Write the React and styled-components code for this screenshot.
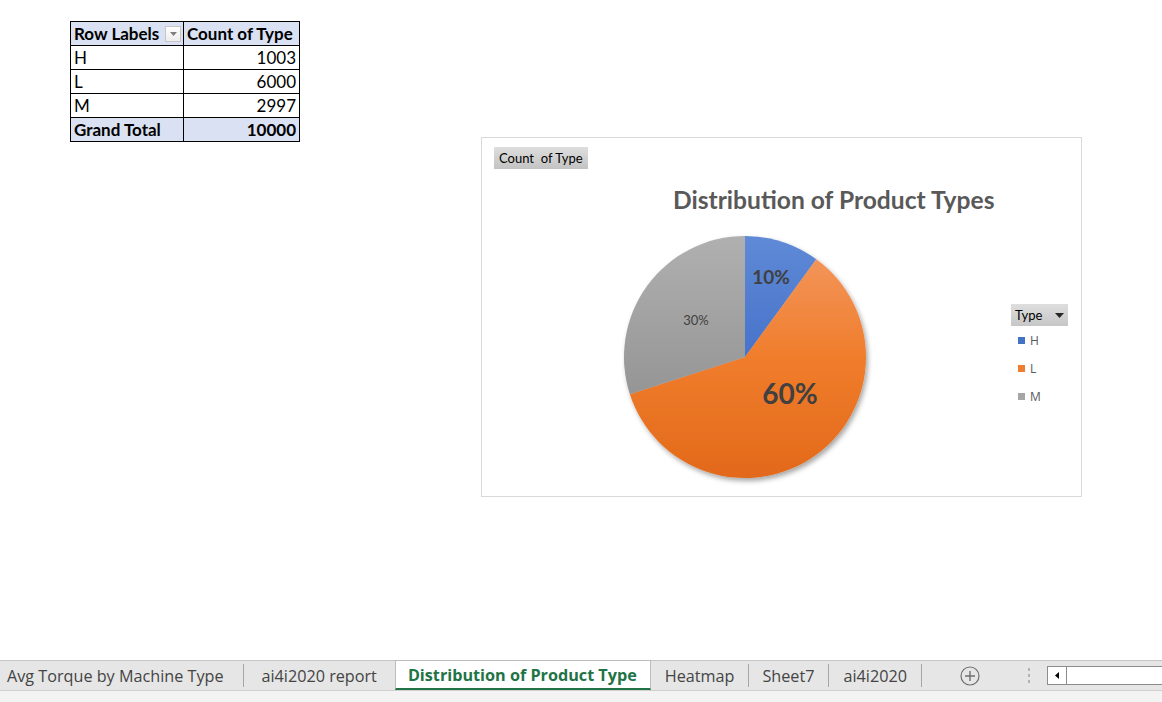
import React from "react";
import styled, { createGlobalStyle } from "styled-components";

const GlobalStyle = createGlobalStyle`
  html, body {
    margin: 0;
    padding: 0;
    background: #fff;
  }
  body {
    font-family: Lato, "Liberation Sans", sans-serif;
  }
`;

const rows = [
  { label: "H", count: 1003 },
  { label: "L", count: 6000 },
  { label: "M", count: 2997 },
];

const legend = [
  { label: "H", color: "#4472c4" },
  { label: "L", color: "#ed7d31" },
  { label: "M", color: "#a5a5a5" },
];

// left/right padding of each sheet tab, taken from the screenshot
const tabs = [
  { name: "Avg Torque by Machine Type", pad: [7, 19] },
  { name: "ai4i2020 report", pad: [18, 18] },
  { name: "Distribution of Product Type", pad: [12, 13], active: true },
  { name: "Heatmap", pad: [14, 14] },
  { name: "Sheet7", pad: [13, 14] },
  { name: "ai4i2020", pad: [14, 14] },
];

const App = () => {
  return (
    <Page>
      <GlobalStyle />
      <Sheet>
        <PivotTable>
          <tbody>
            <tr>
              <HeadCell>
                <HeadLabel>
                  Row Labels
                  <FilterButton>
                    <svg width="7" height="4" viewBox="0 0 7 4">
                      <path d="M0 0h7L3.5 4z" fill="#7f7f7f" />
                    </svg>
                  </FilterButton>
                </HeadLabel>
              </HeadCell>
              <HeadCell>Count of Type</HeadCell>
            </tr>
            {rows.map((row) => (
              <tr key={row.label}>
                <Cell>{row.label}</Cell>
                <Cell $right>{row.count}</Cell>
              </tr>
            ))}
            <tr>
              <TotalCell>Grand Total</TotalCell>
              <TotalCell $right>10000</TotalCell>
            </tr>
          </tbody>
        </PivotTable>

        <ChartBox>
          <FieldButton>Count&nbsp; of Type</FieldButton>
          <ChartTitle>Distribution of Product Types</ChartTitle>
          <PlotRow>
            <PieChart />
            <Legend>
              <LegendButton>
                Type
                <svg width="9" height="5" viewBox="0 0 9 5">
                  <path d="M0 0h9L4.5 5z" fill="#262626" />
                </svg>
              </LegendButton>
              {legend.map((item) => (
                <LegendItem key={item.label}>
                  <Swatch $color={item.color} />
                  {item.label}
                </LegendItem>
              ))}
            </Legend>
          </PlotRow>
        </ChartBox>
      </Sheet>

      <TabBar>
        <TabRow>
          {tabs.map((tab, i) => (
            <React.Fragment key={tab.name}>
              <Tab $active={tab.active} $pad={tab.pad}>
                {tab.name}
              </Tab>
              {!tab.active && !(tabs[i + 1] && tabs[i + 1].active) && <Separator />}
            </React.Fragment>
          ))}
          <AddSheet>
            <svg width="20" height="20" viewBox="0 0 20 20">
              <circle cx="10" cy="10" r="9" fill="none" stroke="#6f6f6f" strokeWidth="1.2" />
              <path d="M10 5v10M5 10h10" stroke="#6f6f6f" strokeWidth="1.4" />
            </svg>
          </AddSheet>
          <Grip>
            <span />
            <span />
            <span />
          </Grip>
          <ScrollBar>
            <ScrollArrow>
              <svg width="4" height="7" viewBox="0 0 4 7">
                <path d="M4 0v7L0 3.5z" fill="#000" />
              </svg>
            </ScrollArrow>
          </ScrollBar>
        </TabRow>
        <StatusStrip />
      </TabBar>
    </Page>
  );
};

const PieChart = () => {
  return (
    <PieSvg width="260" height="264" viewBox="0 0 260 264">
      <defs>
        <linearGradient id="gH" gradientUnits="userSpaceOnUse" x1="0" y1="9" x2="0" y2="251">
          <stop offset="0" stopColor="#5f8ad6" />
          <stop offset="1" stopColor="#2f5cbf" />
        </linearGradient>
        <linearGradient id="gL" gradientUnits="userSpaceOnUse" x1="0" y1="9" x2="0" y2="251">
          <stop offset="0" stopColor="#f39a64" />
          <stop offset="0.5" stopColor="#f07d2c" />
          <stop offset="1" stopColor="#e2691a" />
        </linearGradient>
        <linearGradient id="gM" gradientUnits="userSpaceOnUse" x1="0" y1="9" x2="0" y2="251">
          <stop offset="0" stopColor="#b0b0b0" />
          <stop offset="1" stopColor="#878787" />
        </linearGradient>
        <filter id="pieShadow" x="-10%" y="-10%" width="125%" height="125%">
          <feDropShadow dx="2" dy="3" stdDeviation="2.5" floodColor="#000" floodOpacity="0.35" />
        </filter>
      </defs>
      <g filter="url(#pieShadow)">
        <path d="M130 130 L130 9 A121 121 0 0 1 201.29 32.23 Z" fill="url(#gH)" />
        <path d="M130 130 L201.29 32.23 A121 121 0 1 1 14.86 167.2 Z" fill="url(#gL)" />
        <path d="M130 130 L14.86 167.2 A121 121 0 0 1 130 9 Z" fill="url(#gM)" />
      </g>
      <PieLabel x="156" y="57" fontSize="19" fontWeight="700" textAnchor="middle">
        10%
      </PieLabel>
      <PieLabel x="81" y="98" fontSize="13" textAnchor="middle">
        30%
      </PieLabel>
      <PieLabel x="175" y="177" fontSize="28" fontWeight="700" textAnchor="middle">
        60%
      </PieLabel>
    </PieSvg>
  );
};

const Page = styled.div`
  height: 100vh;
  display: flex;
  flex-direction: column;
  overflow: hidden;
`;

const Sheet = styled.div`
  display: flex;
  align-items: flex-start;
  padding: 21px 0 0 70px;
`;

const PivotTable = styled.table`
  border-collapse: collapse;
  font-family: Lato, "Liberation Sans", sans-serif;
  font-size: 17px;
  color: #000;
  td {
    border: 1px solid #000;
    height: 24px;
    padding: 0 3px;
    box-sizing: border-box;
    line-height: 22px;
  }
  td:first-child {
    width: 113px;
  }
  td:last-child {
    width: 116px;
  }
`;

const HeadCell = styled.td`
  background: #d9e1f2;
  font-weight: 700;
  white-space: nowrap;
`;

const HeadLabel = styled.div`
  display: flex;
  align-items: center;
  justify-content: space-between;
`;

const FilterButton = styled.span`
  width: 16px;
  height: 16px;
  box-sizing: border-box;
  border: 1px solid #c6c6c6;
  background: linear-gradient(#ffffff, #ededed);
  display: flex;
  align-items: center;
  justify-content: center;
  margin-right: -1px;
`;

const Cell = styled.td`
  text-align: ${(p) => (p.$right ? "right" : "left")};
`;

const TotalCell = styled.td`
  background: #d9e1f2;
  font-weight: 700;
  text-align: ${(p) => (p.$right ? "right" : "left")};
`;

const ChartBox = styled.div`
  margin-top: 116px;
  margin-left: 181px;
  width: 601px;
  height: 360px;
  box-sizing: border-box;
  border: 1px solid #d9d9d9;
  display: flex;
  flex-direction: column;
  align-items: flex-start;
  flex-shrink: 0;
`;

const FieldButton = styled.div`
  margin: 9px 0 0 12px;
  height: 22px;
  padding: 0 5px 0 5px;
  display: flex;
  align-items: center;
  font-size: 13px;
  color: #000;
  background: linear-gradient(#dedede, #c3c3c3);
`;

const ChartTitle = styled.div`
  margin-top: 17px;
  padding-left: 191px;
  font-size: 24.6px;
  font-weight: 700;
  line-height: 28px;
  color: #595959;
  white-space: nowrap;
`;

const PlotRow = styled.div`
  display: flex;
  align-items: flex-start;
  margin-top: 13px;
`;

const PieSvg = styled.svg`
  margin-left: 133px;
  display: block;
  flex-shrink: 0;
`;

const PieLabel = styled.text`
  font-family: Lato, "Liberation Sans", sans-serif;
  fill: #404040;
`;

const Legend = styled.div`
  margin-left: 136px;
  margin-top: 77px;
  display: flex;
  flex-direction: column;
`;

const LegendButton = styled.div`
  width: 57px;
  height: 22px;
  box-sizing: border-box;
  padding: 0 4px;
  display: flex;
  align-items: center;
  justify-content: space-between;
  font-size: 13px;
  color: #000;
  background: linear-gradient(#dedede, #c6c6c6);
`;

const LegendItem = styled.div`
  height: 28px;
  display: flex;
  align-items: center;
  padding-left: 7px;
  font-family: "Open Sans", "Liberation Sans", sans-serif;
  font-size: 12px;
  color: #595959;
`;

const Swatch = styled.span`
  width: 7px;
  height: 7px;
  background: ${(p) => p.$color};
  margin-right: 5px;
`;

const TabBar = styled.div`
  margin-top: auto;
  display: flex;
  flex-direction: column;
`;

const TabRow = styled.div`
  height: 29px;
  border-top: 1px solid #c6c6c6;
  background: #e6e6e6;
  display: flex;
  align-items: stretch;
  font-family: "Open Sans", "Noto Sans", sans-serif;
  font-size: 16.2px;
  white-space: nowrap;
`;

const Tab = styled.div`
  display: flex;
  align-items: center;
  padding: 0 ${(p) => p.$pad[1]}px 0 ${(p) => p.$pad[0]}px;
  color: ${(p) => (p.$active ? "#217346" : "#444")};
  font-weight: ${(p) => (p.$active ? 700 : 400)};
  background: ${(p) => (p.$active ? "#fff" : "transparent")};
  border: ${(p) => (p.$active ? "1px solid #bdbdbd" : "none")};
  border-bottom: ${(p) => (p.$active ? "2px solid #217346" : "none")};
  margin-top: ${(p) => (p.$active ? "-1px" : "0")};
`;

const Separator = styled.span`
  width: 1px;
  height: 23px;
  align-self: center;
  background: #a6a6a6;
`;

const AddSheet = styled.div`
  display: flex;
  align-items: center;
  margin-left: 38px;
`;

const Grip = styled.div`
  display: flex;
  flex-direction: column;
  justify-content: center;
  gap: 3px;
  margin-left: 48px;
  span {
    width: 2px;
    height: 3px;
    background: #b3b3b3;
  }
`;

const ScrollBar = styled.div`
  margin-left: 17px;
  flex: 1;
  align-self: center;
  height: 19px;
  box-sizing: border-box;
  border: 1px solid #8c8c8c;
  border-right: none;
  background: #fff;
  display: flex;
`;

const ScrollArrow = styled.div`
  width: 18px;
  border-right: 1px solid #8c8c8c;
  display: flex;
  align-items: center;
  justify-content: center;
`;

const StatusStrip = styled.div`
  height: 11px;
  border-top: 1px solid #d0d0d0;
  background: #f3f3f3;
`;

export default App;
